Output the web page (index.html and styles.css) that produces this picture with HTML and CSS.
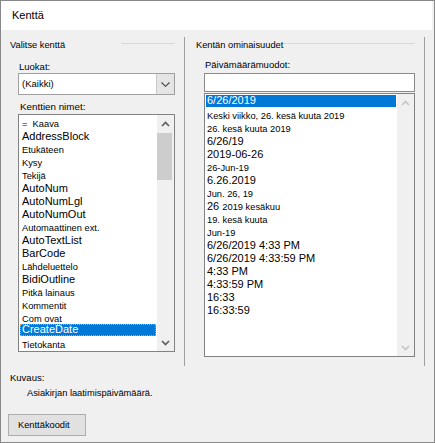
FILE: index.html
```html
<!DOCTYPE html>
<html lang="fi">
<head>
<meta charset="utf-8">
<title>Kenttä</title>
<link rel="stylesheet" href="styles.css">
</head>
<body>
<div class="window">
  <div class="titlebar">Kenttä</div>
  <div class="main">
    <section class="pick">
      <div class="grouphead"><span>Valitse kenttä</span><i class="rule rule-short"></i></div>
      <div class="lbl lbl-cat">Luokat:</div>
      <div class="combo">
        <span class="combo-val">(Kaikki)</span>
        <span class="combo-btn"><svg width="9" height="5" viewBox="0 0 9 5"><polyline points="0.5,0.5 4.5,4.3 8.5,0.5" fill="none" stroke="#444" stroke-width="1.1"/></svg></span>
      </div>
      <div class="lbl lbl-names">Kenttien nimet:</div>
      <div class="listbox fields">
        <div class="items">
          <div class="row">=&nbsp; Kaava</div>
          <div class="row big">AddressBlock</div>
          <div class="row">Etukäteen</div>
          <div class="row">Kysy</div>
          <div class="row">Tekijä</div>
          <div class="row big">AutoNum</div>
          <div class="row big">AutoNumLgl</div>
          <div class="row big">AutoNumOut</div>
          <div class="row">Automaattinen ext.</div>
          <div class="row big">AutoTextList</div>
          <div class="row big">BarCode</div>
          <div class="row">Lähdeluettelo</div>
          <div class="row big">BidiOutline</div>
          <div class="row">Pitkä lainaus</div>
          <div class="row">Kommentit</div>
          <div class="row">Com ovat</div>
          <div class="row big sel focus">CreateDate</div>
          <div class="row">Tietokanta</div>
        </div>
        <div class="scrollbar">
          <div class="sb-btn"><svg width="9" height="6" viewBox="0 0 9 6"><polyline points="1,5 4.5,1.5 8,5" fill="none" stroke="#606060" stroke-width="1.7"/></svg></div>
          <div class="sb-thumb"></div>
          <div class="sb-btn sb-bottom"><svg width="9" height="6" viewBox="0 0 9 6"><polyline points="1,1 4.5,4.5 8,1" fill="none" stroke="#606060" stroke-width="1.7"/></svg></div>
        </div>
      </div>
    </section>
    <section class="props">
      <div class="grouphead"><span>Kentän ominaisuudet</span><i class="rule rule-fill"></i></div>
      <div class="lbl lbl-fmt">Päivämäärämuodot:</div>
      <div class="textbox"></div>
      <div class="listbox formats">
        <div class="items">
          <div class="row big sel">6/26/2019</div>
          <div class="row">Keski viikko, 26. kesä kuuta 2019</div>
          <div class="row">26. kesä kuuta 2019</div>
          <div class="row big">6/26/19</div>
          <div class="row big">2019-06-26</div>
          <div class="row">26-Jun-19</div>
          <div class="row big">6.26.2019</div>
          <div class="row">Jun. 26, 19</div>
          <div class="row big">26 <span class="sm">2019 kesäkuu</span></div>
          <div class="row">19. kesä kuuta</div>
          <div class="row">Jun-19</div>
          <div class="row big">6/26/2019 4:33 PM</div>
          <div class="row big">6/26/2019 4:33:59 PM</div>
          <div class="row big">4:33 PM</div>
          <div class="row big">4:33:59 PM</div>
          <div class="row big">16:33</div>
          <div class="row big">16:33:59</div>
        </div>
        <div class="scrollbar">
          <div class="sb-btn"><svg width="9" height="6" viewBox="0 0 9 6"><polyline points="1,5 4.5,1.5 8,5" fill="none" stroke="#c4c4c4" stroke-width="1.7"/></svg></div>
          <div class="sb-btn sb-bottom"><svg width="9" height="6" viewBox="0 0 9 6"><polyline points="1,1 4.5,4.5 8,1" fill="none" stroke="#c4c4c4" stroke-width="1.7"/></svg></div>
        </div>
      </div>
    </section>
  </div>
  <div class="lbl desc-title">Kuvaus:</div>
  <div class="desc-text">Asiakirjan laatimispäivämäärä.</div>
  <button class="btn" type="button">Kenttäkoodit</button>
</div>
</body>
</html>
```
FILE: styles.css
```css
html, body {
  margin: 0;
  padding: 0;
  overflow: hidden;
}
body {
  font-family: "Liberation Sans", Arial, sans-serif;
  color: #000;
  background: #f0f0f0;
}
.window {
  width: 435px;
  height: 443px;
  box-sizing: border-box;
  border: 1px solid #888;
  background: #f0f0f0;
  overflow: hidden;
}
.titlebar {
  height: 29px;
  line-height: 29px;
  margin-right: 2px;
  padding-left: 11px;
  background: #fff;
  font-size: 11px;
}
.main {
  display: flex;
  margin-top: 7px;
  height: 329px;
}
.pick {
  width: 183px;
  box-sizing: border-box;
  padding: 2px 9px 0 9px;
}
.props {
  width: 241px;
  box-sizing: border-box;
  padding: 2px 9px 0 11px;
  border-left: 1px solid #a0a0a0;
  border-right: 1px solid #a0a0a0;
}
.grouphead {
  display: flex;
  height: 12px;
  line-height: 12px;
  font-size: 9.3px;
  white-space: nowrap;
}
.rule {
  display: block;
  height: 1px;
  margin-top: 4px;
  background: #d9d9d9;
}
.rule-short {
  width: 54px;
  margin-left: auto;
}
.rule-fill {
  flex: 1;
  margin-left: 1px;
}
.lbl {
  font-size: 9.5px;
  line-height: 12px;
  white-space: nowrap;
}
.lbl-cat {
  margin-top: 10px;
  padding-left: 9px;
}
.lbl-names {
  margin-top: 6px;
  margin-bottom: 1px;
  padding-left: 10px;
  font-size: 9.8px;
}
.lbl-fmt {
  margin-top: 8px;
  margin-bottom: 2px;
  padding-left: 9px;
}
.combo {
  display: flex;
  margin-left: 8px;
  width: 157px;
  height: 22px;
  box-sizing: border-box;
  border: 1px solid #a0a0a0;
  background: #fff;
}
.combo-val {
  flex: 1;
  padding-left: 3px;
  line-height: 20px;
  font-size: 9.5px;
}
.combo-btn {
  width: 17px;
  display: flex;
  align-items: center;
  justify-content: center;
  background: #e5e5e5;
  border-left: 1px solid #c8c8c8;
}
.textbox {
  margin-left: 8px;
  width: 211px;
  height: 19px;
  box-sizing: border-box;
  border: 1px solid #8a8a8a;
  background: #fff;
}
.listbox {
  display: flex;
  margin-left: 8px;
  box-sizing: border-box;
  border: 1px solid #828282;
  background: #fff;
  overflow: hidden;
}
.fields {
  width: 157px;
  height: 238px;
}
.formats {
  width: 211px;
  height: 264px;
  margin-top: 1px;
}
.items {
  flex: 1;
  min-width: 0;
  padding: 0 1px;
}
.fields .items {
  padding-top: 3px;
}
.row {
  height: 13px;
  line-height: 13px;
  font-size: 9.3px;
  white-space: nowrap;
}
.fields .row {
  padding-left: 2px;
}
.formats .row {
  padding-left: 1px;
}
.row.big {
  font-size: 11px;
  line-height: 10px;
}
.row .sm {
  font-size: 9.3px;
}
.row.sel {
  height: 12px;
  line-height: 11px;
  background: #0078d7;
  color: #fff;
}
.fields .row.sel {
  margin: -2px 0 3px;
}
.formats .row.sel {
  margin: 1px 0 3px;
}
.row.focus {
  outline: 1px dotted #f29d38;
  outline-offset: -1px;
}
.scrollbar {
  width: 17px;
  display: flex;
  flex-direction: column;
  background: #f0f0f0;
}
.sb-btn {
  height: 17px;
  display: flex;
  align-items: center;
  justify-content: center;
}
.sb-bottom {
  margin-top: auto;
}
.sb-thumb {
  margin-top: 1px;
  height: 47px;
  width: 15px;
  background: #cdcdcd;
}
.desc-title {
  margin-top: 6px;
  padding-left: 9px;
}
.desc-text {
  margin-top: 3px;
  padding-left: 26px;
  font-size: 9.3px;
  line-height: 12px;
}
.btn {
  display: block;
  margin: 15px 0 0 7px;
  width: 78px;
  height: 22px;
  box-sizing: border-box;
  padding: 0 0 0 9px;
  text-align: left;
  border: 1px solid #adadad;
  background: #e1e1e1;
  font-family: inherit;
  font-size: 9.3px;
  color: #000;
}
```
